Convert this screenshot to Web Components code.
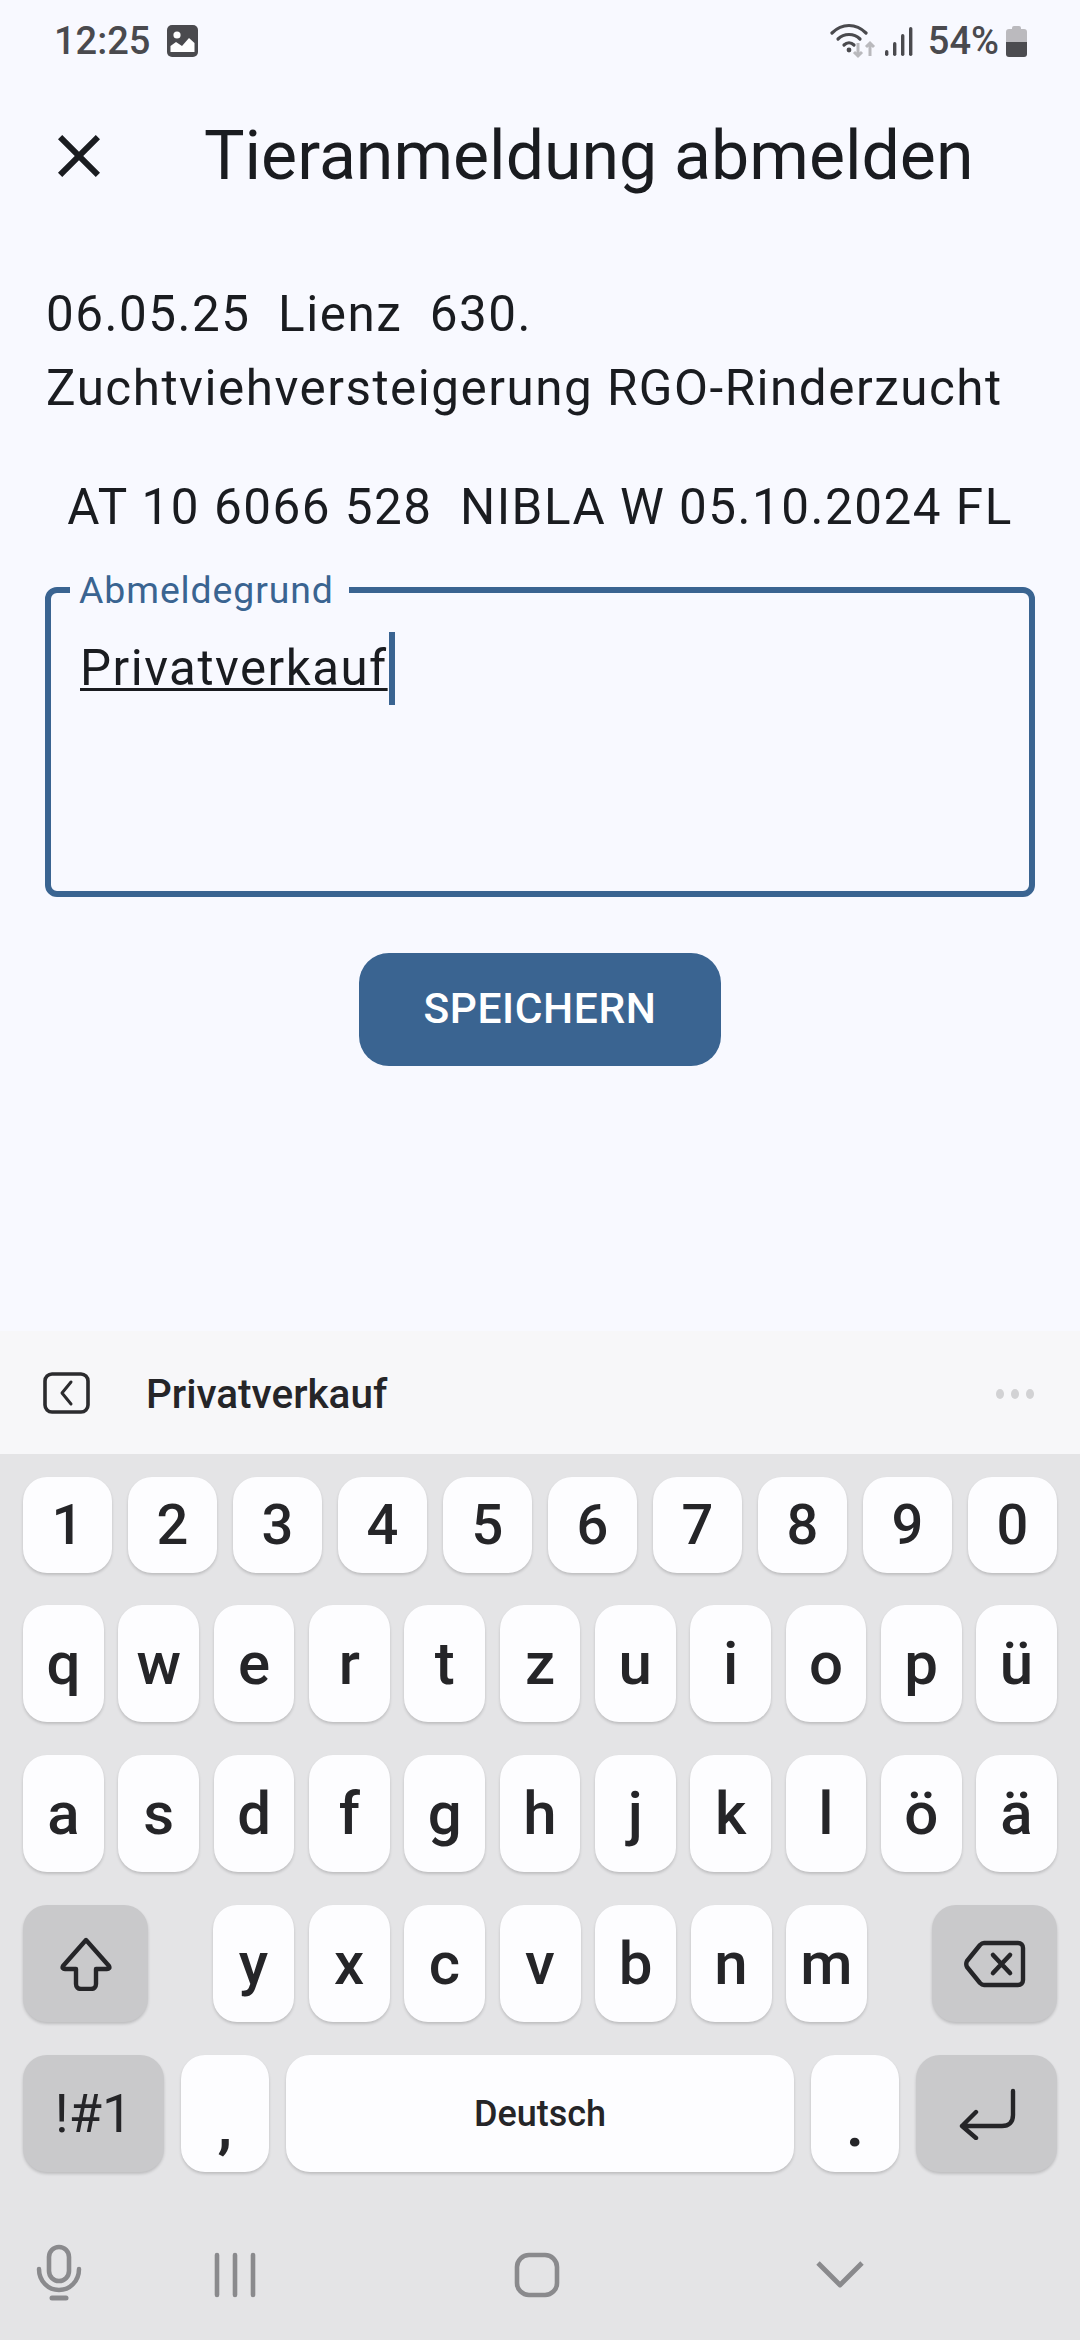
<!DOCTYPE html>
<html lang="de"><head><meta charset="utf-8"><title>Tieranmeldung abmelden</title>
<style>
html,body{margin:0;padding:0;background:#f8f9ff}
body{font-family:Roboto,"Liberation Sans",sans-serif;width:1080px;height:2340px;overflow:hidden}
app-screen{width:1080px;height:2340px}
</style></head><body>
<app-screen></app-screen>
<script>
function def(name, html, init){
  const t=document.createElement('template'); t.innerHTML=html;
  customElements.define(name,class extends HTMLElement{
    constructor(){super();this.attachShadow({mode:'open'}).appendChild(t.content.cloneNode(true));}
  });
}
def('status-bar',`<style>
:host{display:flex;align-items:center;height:84px;box-sizing:border-box;padding:0 53px 2px 54px;color:#4a4a4e;font:500 38px/1 Roboto,sans-serif}
.sp{flex:1}
svg{display:block}
</style>
<span>12:25</span>
<svg style="margin-left:17px" width="31" height="32" viewBox="0 0 31 32"><rect width="31" height="32" rx="5" fill="#4a4a4e"/><circle cx="10" cy="10" r="3.6" fill="#fff"/><path d="M3.5 27V21L9 17l6 4 7-8 5.5 5v9z" fill="#fff"/></svg>
<span class="sp"></span>
<svg width="54" height="36" viewBox="0 0 54 36" fill="none"><g stroke="#4a4a4e" stroke-width="3.2" stroke-linecap="round"><path d="M2 10C12 0 26 0 36 10"/><path d="M8 16C14 10 24 10 30 16"/><path d="M14 22C17 19 21 19 24 22"/></g><circle cx="19" cy="27" r="2.4" fill="#4a4a4e"/><g stroke="#b9b9bd" stroke-width="3" fill="none"><path d="M28 20V33M24 29l4 4 4-4"/><path d="M40 33V20M36 24l4-4 4 4"/></g></svg>
<svg style="margin-left:1px" width="28" height="30" viewBox="0 0 28 30" fill="#4a4a4e"><rect x="0" y="24" width="3.4" height="6" rx="1.7"/><rect x="8" y="16" width="3.4" height="14" rx="1.7"/><rect x="16" y="8" width="3.4" height="22" rx="1.7"/><rect x="24" y="1" width="3.4" height="29" rx="1.7"/></svg>
<span style="margin-left:15px">54%</span>
<svg style="margin-left:7px" width="21" height="32" viewBox="0 0 21 32"><path d="M6 3a2 2 0 0 1 2-2h5a2 2 0 0 1 2 2v1h3a3 3 0 0 1 3 3v10H0V7a3 3 0 0 1 3-3h3z" fill="#bbbabe"/><path d="M0 17h21v12a3 3 0 0 1-3 3H3a3 3 0 0 1-3-3z" fill="#4c4c50"/></svg>`);
def('app-bar',`<style>
:host{display:flex;align-items:center;height:144px;padding-left:43px;color:#1a1c20;font:400 68px/1 Roboto,sans-serif}
svg{display:block;flex:none}
h1{margin:0 0 0 89px;font:inherit;white-space:nowrap}
</style>
<svg width="72" height="72" viewBox="0 0 24 24" fill="#1a1c20"><path d="M19 6.41 17.59 5 12 10.59 6.41 5 5 6.41 10.59 12 5 17.59 6.41 19 12 13.41 17.59 19 19 17.59 13.41 12z"/></svg>
<h1><slot></slot></h1>`);
def('body-text',`<style>:host{display:block;color:#1a1c20;font:400 49.4px/74px Roboto,sans-serif;letter-spacing:1.5px;white-space:pre-wrap}</style><slot></slot>`);
def('outlined-field',`<style>
:host{display:block;position:relative;height:310px;box-sizing:border-box;border:6px solid #3a6491;border-radius:12px;padding:38px 0 0 29px;color:#1a1c20;font:400 49.2px/74px Roboto,sans-serif;letter-spacing:1.5px}
.label{position:absolute;left:19px;top:-23px;padding:0 15px 0 9px;background:#f8f9ff;color:#3a6491;font:400 37.4px/40px Roboto,sans-serif;letter-spacing:.9px}
.val{display:inline-block;position:relative;text-decoration:underline;text-decoration-thickness:3px;text-underline-offset:3px}
.caret{position:absolute;right:-7px;top:1px;width:6px;height:73px;background:#3a6491}
</style>
<span class="label">Abmeldegrund</span>
<span class="val"><slot></slot><span class="caret"></span></span>`);
def('filled-button',`<style>
:host{display:flex;align-items:center;justify-content:center;width:362px;height:113px;border-radius:30px;background:#3a6491;color:#fff;font:500 42.5px/1 Roboto,sans-serif;letter-spacing:.6px}
</style><slot></slot>`);
def('kb-key',`<style>
:host{display:flex;align-items:center;justify-content:center;flex:1 1 0;min-width:0;height:117px;box-sizing:border-box;border-radius:24px;background:#fdfdff;box-shadow:0 2px 3px rgba(0,0,0,.17);color:#252528;font:500 60px/1 Roboto,sans-serif}
:host([num]){font-size:56px;height:96px;font-weight:500}
:host([fn]){background:#c9c9cb}
:host([sm]){font-size:36px}
:host([low]){padding-top:24px;font-weight:700}
:host([sym]){font-size:54px;font-weight:400}
svg{display:block}
</style><slot></slot>`);
def('kb-suggest',`<style>
:host{display:flex;align-items:center;height:123px;box-sizing:border-box;padding:3px 46px 0 43px;background:#f7f7f9;color:#252528;font:500 40.5px/1 Roboto,sans-serif}
svg{display:block;flex:none;margin-top:-3px}
span{margin-left:56px;flex:1}
i{display:block;width:8px;height:10px;border-radius:50%;background:#d2d2d4;margin-left:7px}
</style>
<svg width="47" height="42" viewBox="0 0 47 42" fill="none" stroke="#2b2b2e"><rect x="2" y="2" width="43" height="38" rx="7" stroke-width="3.6"/><path d="M28 10 19 21l9 11" stroke-width="3" stroke-linecap="round" stroke-linejoin="round"/></svg>
<span><slot></slot></span><i></i><i></i><i></i>`);
def('kb-row',`<style>:host{display:flex;gap:14.5px}</style><slot></slot>`);
def('nav-bar',`<style>
:host{display:block;position:relative;height:144px}
svg{position:absolute;display:block;fill:none;stroke:#8a8a8d;stroke-linecap:round;stroke-linejoin:round}
</style>
<svg style="left:36px;top:48px" width="46" height="58" viewBox="0 0 46 58" stroke-width="4.5"><rect x="13" y="3" width="20" height="34" rx="10" stroke-width="4.6"/><path d="M3 25c0 12 9 21 20 21s20-9 20-21"/><path d="M16 54h14" stroke-width="5"/></svg>
<svg style="left:210px;top:56px" width="50" height="46" viewBox="0 0 50 46" stroke-width="4.6"><path d="M7 3v40M25 3v40M43 3v40"/></svg>
<svg style="left:514px;top:55px" width="46" height="48" viewBox="0 0 46 48" stroke-width="4.6"><rect x="3" y="4" width="40" height="40" rx="12"/></svg>
<svg style="left:814px;top:63px" width="52" height="30" viewBox="0 0 52 30" stroke-width="4.8"><path d="M4 4l22 22L48 4" stroke-linecap="butt"/></svg>`);
def('kb-panel',`<style>
:host{display:block;background:#e4e4e6}
.keys{display:flex;flex-direction:column;padding:23px 23px 0;gap:33px}
kb-row.r5{gap:17px}
kb-row.n{gap:16px;margin-bottom:-1px}
svg{display:block;fill:none;stroke:#252528;stroke-linecap:round;stroke-linejoin:round;stroke-width:4.4}
nav-bar{margin-top:24px}
</style>
<kb-suggest>Privatverkauf</kb-suggest>
<div class="keys">
<kb-row class="n"><kb-key num>1</kb-key><kb-key num>2</kb-key><kb-key num>3</kb-key><kb-key num>4</kb-key><kb-key num>5</kb-key><kb-key num>6</kb-key><kb-key num>7</kb-key><kb-key num>8</kb-key><kb-key num>9</kb-key><kb-key num>0</kb-key></kb-row>
<kb-row><kb-key>q</kb-key><kb-key>w</kb-key><kb-key>e</kb-key><kb-key>r</kb-key><kb-key>t</kb-key><kb-key>z</kb-key><kb-key>u</kb-key><kb-key>i</kb-key><kb-key>o</kb-key><kb-key>p</kb-key><kb-key>ü</kb-key></kb-row>
<kb-row><kb-key>a</kb-key><kb-key>s</kb-key><kb-key>d</kb-key><kb-key>f</kb-key><kb-key>g</kb-key><kb-key>h</kb-key><kb-key>j</kb-key><kb-key>k</kb-key><kb-key>l</kb-key><kb-key>ö</kb-key><kb-key>ä</kb-key></kb-row>
<kb-row>
<kb-key fn style="flex:none;width:125px;margin-right:50.5px"><svg width="52" height="54" viewBox="0 0 52 54"><path d="M26 3 3 29c-1 2 0 3 2 3h11v15c0 3 2 5 5 5h10c3 0 5-2 5-5V32h11c2 0 3-1 2-3z"/></svg></kb-key>
<kb-key style="flex:none;width:81px">y</kb-key><kb-key style="flex:none;width:81px">x</kb-key><kb-key style="flex:none;width:81px">c</kb-key><kb-key style="flex:none;width:81px">v</kb-key><kb-key style="flex:none;width:81px">b</kb-key><kb-key style="flex:none;width:81px">n</kb-key><kb-key style="flex:none;width:81px">m</kb-key>
<kb-key fn style="flex:none;width:125px;margin-left:50.5px"><svg width="62" height="48" viewBox="0 0 62 48"><path d="M20 3h34c3 0 5 2 5 5v32c0 3-2 5-5 5H20c-2 0-3-1-4-2L3 27c-1-2-1-4 0-6L16 5c1-1 2-2 4-2z"/><path d="M29 15l17 18M46 15 29 33" stroke-width="4.6"/></svg></kb-key>
</kb-row>
<kb-row class="r5">
<kb-key fn sym style="flex:none;width:141px">!#1</kb-key>
<kb-key low style="flex:none;width:88px">,</kb-key>
<kb-key sm style="flex:1">Deutsch</kb-key>
<kb-key low style="flex:none;width:88px">.</kb-key>
<kb-key fn style="flex:none;width:141px"><svg width="58" height="52" viewBox="0 0 58 52"><path d="M55 3v24c0 7-4 11-11 11H4M18 24 4 38l14 12"/></svg></kb-key>
</kb-row>
</div>
<nav-bar></nav-bar>`);
def('app-screen',`<style>
:host{display:flex;flex-direction:column;background:#f8f9ff}
main{display:flex;flex-direction:column;padding:49px 45px 0 45px}
.t{padding-left:1px}
.c{text-align:center;margin-top:45px}
outlined-field{margin-top:43px}
filled-button{align-self:center;margin-top:56px}
kb-panel{margin-top:auto}
</style>
<status-bar></status-bar>
<app-bar>Tieranmeldung abmelden</app-bar>
<main>
<body-text class="t">06.05.25  Lienz  630.
Zuchtviehversteigerung RGO-Rinderzucht</body-text>
<body-text class="c">AT 10 6066 528  NIBLA W 05.10.2024 FL</body-text>
<outlined-field>Privatverkauf</outlined-field>
<filled-button>SPEICHERN</filled-button>
</main>
<kb-panel></kb-panel>`);
</script>
</body></html>
